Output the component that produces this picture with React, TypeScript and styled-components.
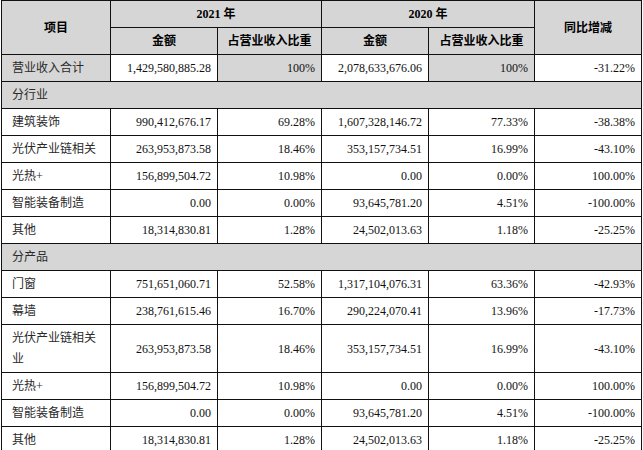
import React from "react";
import styled, { createGlobalStyle } from "styled-components";

const Global = createGlobalStyle`
  html, body { margin: 0; padding: 0; background: #ffffff; }
  body { font-family: "Liberation Serif", "Noto Sans CJK SC", serif; }
`;

const Page = styled.div`
  padding: 0 0 0 1px;
`;

const Table = styled.table`
  border-collapse: collapse;
  table-layout: fixed;
  width: 640px;
  font-family: "Liberation Serif", "Noto Sans CJK SC", serif;
  font-size: 12px;
  color: #1e1e1e;
`;

const Th = styled.th<{ $h?: number }>`
  background: #d6d6d6;
  border: 1px solid #111;
  font-weight: bold;
  color: #000;
  text-align: center;
  line-height: 21px;
  padding: 3px 6px 2px;
  height: ${(p) => (p.$h ? `${p.$h}px` : "auto")};
`;

const Td = styled.td<{ $gray?: boolean; $align?: "left" | "right" }>`
  background: ${(p) => (p.$gray ? "#d6d6d6" : "#ffffff")};
  border: 1px solid #111;
  text-align: ${(p) => p.$align || "right"};
  line-height: 21px;
  padding: ${(p) => (p.$align === "left" ? "3px 6px 2px 10px" : "3px 6px 2px 6px")};
  color: ${(p) => (p.$align === "left" ? "#2a2a2a" : "#111")};
  word-break: break-all;
`;

const SectionCell = styled.td`
  background: #d6d6d6;
  border: 1px solid #111;
  text-align: left;
  line-height: 21px;
  padding: 3px 6px 2px 10px;
  color: #2a2a2a;
`;

type Row = [string, string, string, string, string, string];

const industry: Row[] = [
  ["建筑装饰", "990,412,676.17", "69.28%", "1,607,328,146.72", "77.33%", "-38.38%"],
  ["光伏产业链相关", "263,953,873.58", "18.46%", "353,157,734.51", "16.99%", "-43.10%"],
  ["光热+", "156,899,504.72", "10.98%", "0.00", "0.00%", "100.00%"],
  ["智能装备制造", "0.00", "0.00%", "93,645,781.20", "4.51%", "-100.00%"],
  ["其他", "18,314,830.81", "1.28%", "24,502,013.63", "1.18%", "-25.25%"],
];

const product: Row[] = [
  ["门窗", "751,651,060.71", "52.58%", "1,317,104,076.31", "63.36%", "-42.93%"],
  ["幕墙", "238,761,615.46", "16.70%", "290,224,070.41", "13.96%", "-17.73%"],
  ["光伏产业链相关业", "263,953,873.58", "18.46%", "353,157,734.51", "16.99%", "-43.10%"],
  ["光热+", "156,899,504.72", "10.98%", "0.00", "0.00%", "100.00%"],
  ["智能装备制造", "0.00", "0.00%", "93,645,781.20", "4.51%", "-100.00%"],
  ["其他", "18,314,830.81", "1.28%", "24,502,013.63", "1.18%", "-25.25%"],
];

const DataRow: React.FC<{ row: Row }> = ({ row }) => (
  <tr>
    <Td $align="left">{row[0]}</Td>
    {row.slice(1).map((v, i) => (
      <Td key={i}>{v}</Td>
    ))}
  </tr>
);

export default function App() {
  return (
    <>
      <Global />
      <Page>
        <Table>
          <colgroup>
            <col style={{ width: 109 }} />
            <col style={{ width: 107 }} />
            <col style={{ width: 104 }} />
            <col style={{ width: 107 }} />
            <col style={{ width: 106 }} />
            <col style={{ width: 107 }} />
          </colgroup>
          <thead>
            <tr>
              <Th rowSpan={2}>项目</Th>
              <Th colSpan={2}>2021 年</Th>
              <Th colSpan={2}>2020 年</Th>
              <Th rowSpan={2}>同比增减</Th>
            </tr>
            <tr>
              <Th>金额</Th>
              <Th>占营业收入比重</Th>
              <Th>金额</Th>
              <Th>占营业收入比重</Th>
            </tr>
          </thead>
          <tbody>
            <tr>
              <Td $align="left" $gray>营业收入合计</Td>
              <Td>1,429,580,885.28</Td>
              <Td $gray>100%</Td>
              <Td>2,078,633,676.06</Td>
              <Td $gray>100%</Td>
              <Td>-31.22%</Td>
            </tr>
            <tr>
              <SectionCell colSpan={6}>分行业</SectionCell>
            </tr>
            {industry.map((r, i) => (
              <DataRow key={`i${i}`} row={r} />
            ))}
            <tr>
              <SectionCell colSpan={6}>分产品</SectionCell>
            </tr>
            {product.map((r, i) => (
              <DataRow key={`p${i}`} row={r} />
            ))}
          </tbody>
        </Table>
      </Page>
    </>
  );
}
